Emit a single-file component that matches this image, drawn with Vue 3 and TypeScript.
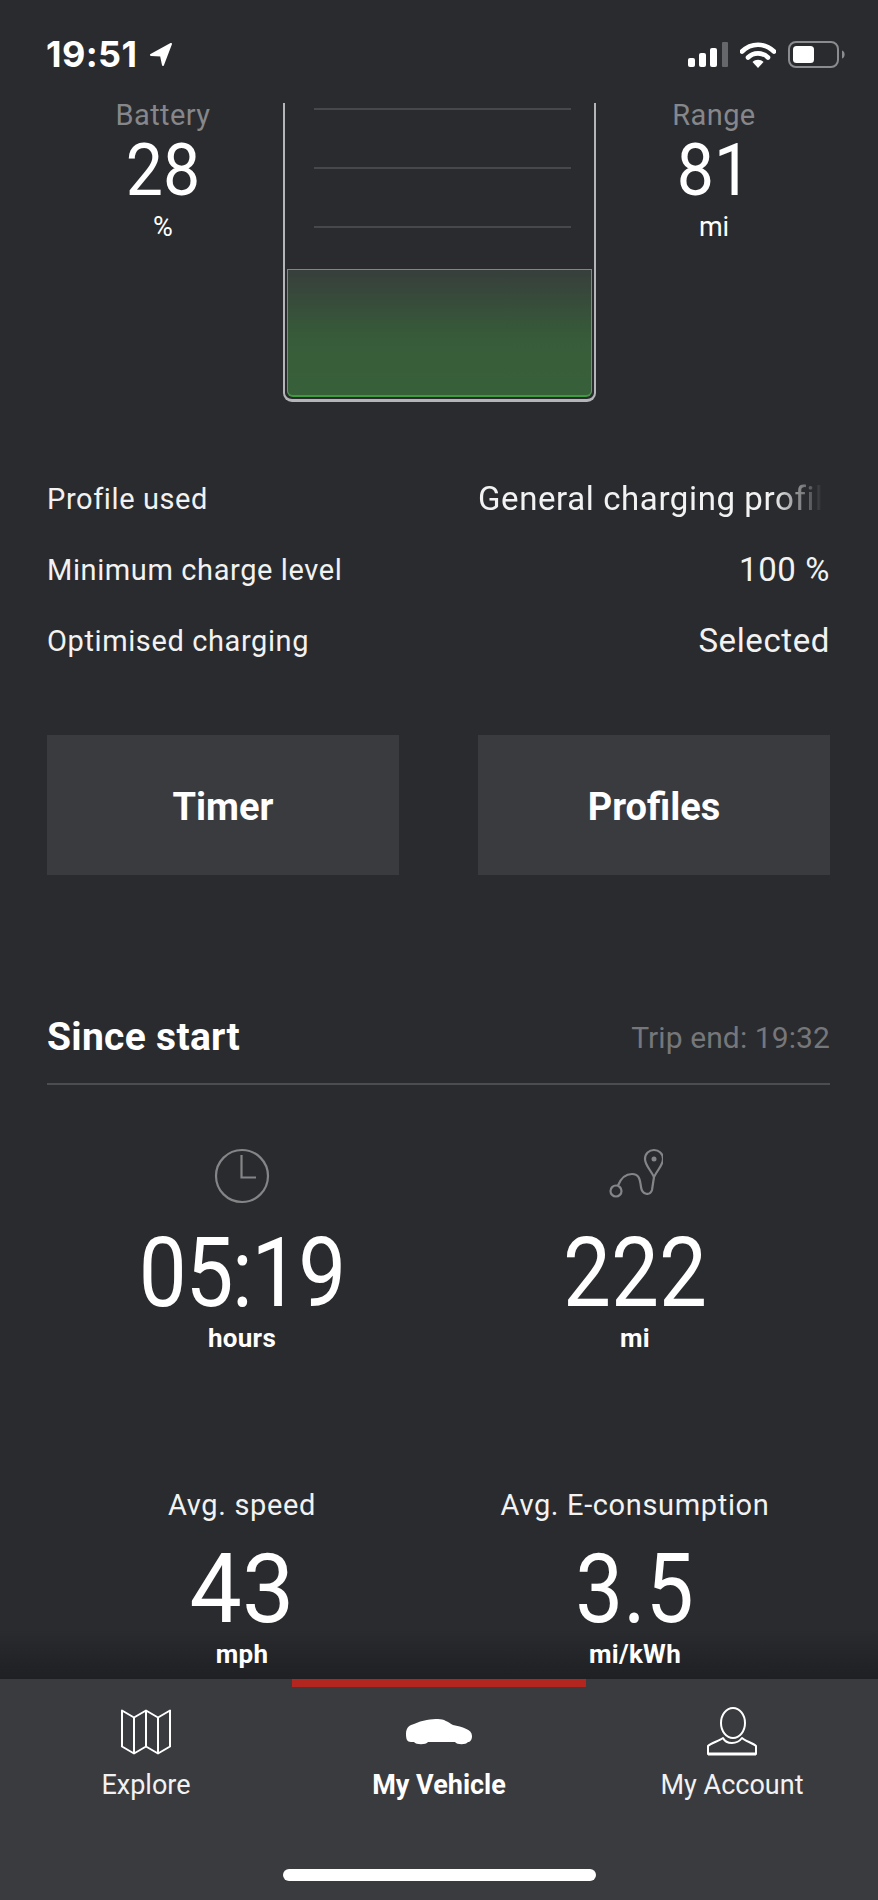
<script setup lang="ts">
const rows = [
  { label: 'Profile used', value: 'General charging profile', fade: true },
  { label: 'Minimum charge level', value: '100 %', fade: false },
  { label: 'Optimised charging', value: 'Selected', fade: false },
]
</script>

<template>
  <div class="app">
    <header class="status">
      <div class="clock">
        <span>19:51</span>
        <svg class="arrow" width="24" height="25" viewBox="0 0 24 25"><path d="M22 2 L2 13 L12 13.500 L14 23 Z" fill="#fff" stroke="#fff" stroke-width="2" stroke-linejoin="round" /></svg>
      </div>
      <div class="status-icons">
        <svg width="40" height="25" viewBox="0 0 40 25">
          <rect x="0" y="16" width="7" height="9" rx="2" fill="#fff" />
          <rect x="11" y="11" width="7" height="14" rx="2" fill="#fff" />
          <rect x="22" y="6" width="7" height="19" rx="2" fill="#fff" />
          <rect x="34" y="0" width="6" height="25" rx="1" fill="#66676a" />
        </svg>
        <svg width="36" height="26" viewBox="0 0 36 26">
          <path d="M2 9.500 C11 0.500 25 0.500 34 9.500" fill="none" stroke="#fff" stroke-width="4.600" stroke-linecap="round" />
          <path d="M8 15.500 C13.500 10 22.500 10 28 15.500" fill="none" stroke="#fff" stroke-width="4.600" stroke-linecap="round" />
          <path d="M12.500 20 C15.500 17 20.500 17 23.500 20 L18 26 Z" fill="#fff" />
        </svg>
        <svg width="58" height="27" viewBox="0 0 58 27">
          <rect x="1" y="1" width="49" height="25" rx="7" fill="none" stroke="#8b8c8e" stroke-width="2" />
          <rect x="5" y="5" width="21" height="17" rx="3.500" fill="#fff" />
          <path d="M54 9.500 C57.500 10.500 57.500 16.500 54 17.500 Z" fill="#8b8c8e" />
        </svg>
      </div>
    </header>

    <main class="main">
      <section class="levels">
        <div class="stat">
          <div class="stat-label">Battery</div>
          <div class="stat-value">28</div>
          <div class="stat-unit">%</div>
        </div>
        <div class="tank">
          <div class="tank-lines">
            <div class="tank-line"></div>
            <div class="tank-line"></div>
            <div class="tank-line"></div>
          </div>
          <div class="tank-fill"></div>
        </div>
        <div class="stat stat--right">
          <div class="stat-label">Range</div>
          <div class="stat-value">81</div>
          <div class="stat-unit">mi</div>
        </div>
      </section>

      <section class="rows">
        <div class="row" v-for="row in rows" :key="row.label">
          <span class="row-label">{{ row.label }}</span>
          <span class="row-value" :class="{ 'row-value--fade': row.fade }">{{ row.value }}</span>
        </div>
      </section>

      <section class="buttons">
        <button class="action">Timer</button>
        <button class="action">Profiles</button>
      </section>

      <section class="trip-head">
        <h2 class="trip-title">Since start</h2>
        <span class="trip-end">Trip end: 19:32</span>
      </section>

      <section class="trip-grid">
        <div class="cell">
          <svg class="cell-icon" width="56" height="56" viewBox="0 0 56 56">
            <circle cx="28" cy="28" r="26" fill="none" stroke="#848587" stroke-width="2.200" />
            <path d="M27.500 7 V29.500 H42" fill="none" stroke="#848587" stroke-width="2.200" />
          </svg>
          <div class="cell-value cell-value--time">05:19</div>
          <div class="cell-unit">hours</div>
        </div>
        <div class="cell">
          <svg class="cell-icon" width="56" height="56" viewBox="0 0 56 56">
            <circle cx="9" cy="43" r="5.500" fill="none" stroke="#848587" stroke-width="2.200" />
            <path d="M11 37.500 C14 30 19 26 25 26 C32 26 33 31 34 39 C35 47 43 48 45 42 L47 29" fill="none" stroke="#848587" stroke-width="2.200" />
            <path d="M47 29 C43 21 38 17 38 11 C38 5.500 42 2 47 2 C52 2 56 5.500 56 11 C56 17 51 21 47 29 Z" fill="none" stroke="#848587" stroke-width="2.200" />
            <circle cx="47" cy="11" r="2.500" fill="#848587" />
          </svg>
          <div class="cell-value">222</div>
          <div class="cell-unit">mi</div>
        </div>
        <div class="cell cell--lower">
          <div class="cell-label">Avg. speed</div>
          <div class="cell-value cell-value--lower cell-value--wide">43</div>
          <div class="cell-unit">mph</div>
        </div>
        <div class="cell cell--lower">
          <div class="cell-label">Avg. E-consumption</div>
          <div class="cell-value cell-value--lower">3.5</div>
          <div class="cell-unit">mi/kWh</div>
        </div>
      </section>
      <div class="main-shade"></div>
    </main>

    <nav class="tabs">
      <div class="tab">
        <svg class="tab-icon" width="50" height="46" viewBox="0 0 50 46">
          <path d="M1 2 L13 9 L25 2 L37 9 L49 2 V38 L37 45 L25 38 L13 45 L1 38 Z M13 9 V45 M25 2 V38 M37 9 V45" fill="none" stroke="#fff" stroke-width="2" stroke-linejoin="round" />
        </svg>
        <span class="tab-label">Explore</span>
      </div>
      <div class="tab tab--active">
        <div class="tab-marker"></div>
        <svg class="tab-icon" width="66" height="49" viewBox="0 -12 66 49">
          <path d="M0 15 C0 8 4 6 8 5 C16 1 26 0 32 0 C38 0 42 3 47 6 C56 8 66 10 66 17 C66 21 64 23 62 23 C60 26 51 26 49 23 H22 C20 26 10 26 8 23 H5 C1 23 0 20 0 15 Z" fill="#fff" />
        </svg>
        <span class="tab-label">My Vehicle</span>
      </div>
      <div class="tab">
        <svg class="tab-icon" width="50" height="49" viewBox="0 0 50 49">
          <ellipse cx="26" cy="16" rx="12" ry="15" fill="none" stroke="#fff" stroke-width="2" />
          <path d="M1 47 V39 C4 36 12 34 16 31 C18 35 22 36 25 36 C28 36 32 35 35 31 C38 34 46 36 49 39 V47 Z" fill="none" stroke="#fff" stroke-width="2" stroke-linejoin="round" />
          <path d="M1 47 H49" stroke="#fff" stroke-width="3" />
        </svg>
        <span class="tab-label">My Account</span>
      </div>
      <div class="home-bar"></div>
    </nav>
  </div>
</template>

<style>
html, body {
  margin: 0;
  background: #2a2b2f;
}
</style>

<style scoped>
.app {
  width: 878px;
  height: 1900px;
  display: flex;
  flex-direction: column;
  overflow: hidden;
  background: #2a2b2f;
  color: #fff;
  font-family: Roboto, "Liberation Sans", sans-serif;
  font-weight: 400;
}

.status {
  height: 93px;
  flex: none;
  box-sizing: border-box;
  padding: 38px 32px 0 46px;
  display: flex;
  justify-content: space-between;
  align-items: flex-start;
}

.clock {
  display: flex;
  align-items: center;
  gap: 12px;
  font-family: Inter, sans-serif;
  font-size: 36px;
  font-weight: 700;
  line-height: 32px;
  letter-spacing: 0.4px;
}

.status-icons {
  display: flex;
  align-items: center;
  gap: 12px;
  padding-top: 3px;
}

.main {
  flex: 1;
  position: relative;
  overflow: hidden;
  min-height: 0;
}

.levels {
  display: grid;
  grid-template-columns: 236px 313px 232px;
  padding: 10px 0 0 47px;
}

.stat {
  width: 232px;
  text-align: center;
}

.stat--right {
  margin-left: 2px;
}

.stat-label {
  color: #86878a;
  font-size: 29px;
  line-height: 24px;
  letter-spacing: 0.4px;
}

.stat-value {
  font-size: 72px;
  line-height: 70px;
  margin-top: 9px;
  transform: scaleX(0.92);
}

.stat-unit {
  font-size: 27px;
  line-height: 30px;
  margin-top: 6px;
}

.tank {
  box-sizing: border-box;
  height: 299px;
  border: solid #b4b5b6;
  border-width: 0 2px 3px;
  border-radius: 0 0 9px 9px;
  padding: 5px 2px 2px;
  display: flex;
  flex-direction: column;
}

.tank-lines {
  display: flex;
  flex-direction: column;
  gap: 57px;
}

.tank-line {
  height: 2px;
  background: #47484b;
  margin: 0 21px 0 27px;
}

.tank-fill {
  margin-top: auto;
  height: 128px;
  box-sizing: border-box;
  border: 1px solid #5fa05c;
  border-bottom: 2px solid #3f9a3f;
  border-radius: 0 0 6px 6px;
  background: linear-gradient(#373f3c, #375c39 55%, #376039);
}

.rows {
  margin: 61px 48px 0 47px;
}

.row {
  height: 71px;
  display: flex;
  justify-content: space-between;
  align-items: center;
}

.row-label {
  font-size: 29px;
  letter-spacing: 0.6px;
  color: #f2f2f2;
}

.row-value {
  font-size: 33px;
  letter-spacing: 0.6px;
  color: #f2f2f2;
  white-space: nowrap;
}

.row-value--fade {
  width: 352px;
  overflow: hidden;
  -webkit-mask-image: linear-gradient(90deg, #000 84%, transparent 98%);
  mask-image: linear-gradient(90deg, #000 84%, transparent 98%);
}

.buttons {
  display: grid;
  grid-template-columns: 352px 352px;
  column-gap: 79px;
  margin: 59px 0 0 47px;
}

.action {
  height: 140px;
  border: none;
  background: #3a3b3f;
  color: #fff;
  font-family: inherit;
  font-size: 38px;
  font-weight: 700;
  padding: 3px 0 0;
}

.trip-head {
  margin: 127px 48px 0 47px;
  height: 83px;
  box-sizing: border-box;
  border-bottom: 2px solid #4c4d50;
  display: flex;
  justify-content: space-between;
  align-items: center;
  padding-bottom: 11px;
}

.trip-title {
  margin: 0;
  font-size: 39px;
  font-weight: 700;
  letter-spacing: 0.3px;
}

.trip-end {
  color: #76777a;
  font-size: 30px;
  letter-spacing: 0.1px;
}

.trip-grid {
  display: grid;
  grid-template-columns: 390px 396px;
  padding-left: 47px;
  margin-top: 63px;
  position: relative;
  z-index: 1;
}

.cell {
  display: flex;
  flex-direction: column;
  align-items: center;
}

.cell--lower {
  margin-top: 134px;
}

.cell-icon {
  display: block;
}

.cell-value {
  font-size: 96px;
  line-height: 96px;
  margin-top: 21px;
  transform: scaleX(0.89);
}

.cell-value--time {
  letter-spacing: -1.500px;
}

.cell-value--lower {
  margin-top: 18px;
}

.cell-value--wide {
  transform: scaleX(0.97);
}

.cell-unit {
  font-size: 26px;
  font-weight: 700;
  line-height: 30px;
  margin-top: 2px;
  letter-spacing: 0.3px;
}

.cell-label {
  font-size: 29px;
  line-height: 36px;
  letter-spacing: 0.650px;
  color: #f2f2f2;
}

.main-shade {
  position: absolute;
  left: 0;
  right: 0;
  bottom: 0;
  height: 50px;
  background: linear-gradient(rgba(31, 32, 35, 0), #1f2023);
  pointer-events: none;
}

.tabs {
  height: 221px;
  flex: none;
  position: relative;
  background: #3a3b3f;
  display: grid;
  grid-template-columns: 292px 294px 292px;
}

.tab {
  position: relative;
  display: flex;
  flex-direction: column;
  align-items: center;
  padding-top: 28px;
}

.tab-marker {
  position: absolute;
  top: 0;
  left: 0;
  right: 0;
  height: 8px;
  background: #b3261f;
}

.tab-icon {
  height: 49px;
  display: block;
}

.tab-label {
  font-size: 27px;
  line-height: 36px;
  margin-top: 11px;
  color: #f2f2f2;
}

.tab--active .tab-label {
  font-weight: 700;
  color: #fff;
}

.home-bar {
  position: absolute;
  left: 283px;
  top: 190px;
  width: 313px;
  height: 12px;
  border-radius: 6px;
  background: #fff;
}
</style>
